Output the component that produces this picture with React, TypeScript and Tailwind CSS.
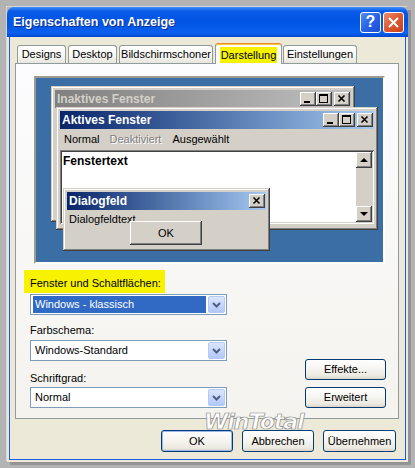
import React from 'react'

const winFrame =
  'bg-[#d4d0c8] shadow-[inset_-1px_-1px_0_#404040,inset_1px_1px_0_#d4d0c8,inset_-2px_-2px_0_#808080,inset_2px_2px_0_#ffffff]'
const raised =
  'bg-[#d4d0c8] shadow-[inset_-1px_-1px_0_#404040,inset_1px_1px_0_#ffffff,inset_-2px_-2px_0_#808080,inset_2px_2px_0_#d4d0c8]'
const sunken =
  'shadow-[inset_1px_1px_0_#808080,inset_-1px_-1px_0_#ffffff,inset_2px_2px_0_#404040,inset_-2px_-2px_0_#d4d0c8]'
const xpButton =
  'rounded-[3px] border border-[#003c74] bg-[linear-gradient(180deg,#ffffff_0%,#f6f5f1_45%,#ebe9e0_85%,#d8d3c8_100%)] flex items-center justify-center'
const activeCaption = 'bg-linear-to-r from-[#0a246a] to-[#a6caf0]'

function CapBtn({ kind }: { kind: 'min' | 'max' | 'close' }) {
  return (
    <div className={`w-[16px] h-[14px] ${raised}`}>
      <svg width="16" height="14" viewBox="0 0 16 14">
        {kind === 'min' && <rect x="4" y="9" width="6" height="2" fill="#000" />}
        {kind === 'max' && (
          <>
            <rect x="3.5" y="2.5" width="8" height="8" fill="none" stroke="#000" />
            <rect x="3" y="2" width="9" height="2" fill="#000" />
          </>
        )}
        {kind === 'close' && <path d="M4.5 3.5 L10.5 9.5 M10.5 3.5 L4.5 9.5" stroke="#000" strokeWidth="1.6" />}
      </svg>
    </div>
  )
}

function ScrollBtn({ up }: { up?: boolean }) {
  return (
    <div className={`w-[16px] h-[16px] ${raised}`}>
      <svg width="16" height="16" viewBox="0 0 16 16">
        {up ? <path d="M4 10 H12 L8 6 Z" fill="#000" /> : <path d="M4 6 H12 L8 10 Z" fill="#000" />}
      </svg>
    </div>
  )
}

function Combo({ value, selected }: { value: string; selected?: boolean }) {
  return (
    <div className="ml-[6px] w-[197px] h-[21px] border border-[#7f9db9] bg-white flex items-center pl-[2px] pr-[1px] gap-[2px]">
      <div
        className={`flex-1 h-[17px] flex items-center pl-[2px] ${selected ? 'bg-[#316ac5] text-white' : 'text-black'}`}
      >
        {value}
      </div>
      <div className="w-[17px] h-[17px] rounded-[2px] border border-[#b6c8f5] bg-[linear-gradient(180deg,#dbe6fe_0%,#c3d4fb_60%,#b2c8f8_100%)] flex items-center justify-center">
        <svg width="11" height="8" viewBox="0 0 11 8">
          <path d="M2 2 L5.5 5.5 L9 2" fill="none" stroke="#4d6185" strokeWidth="2" />
        </svg>
      </div>
    </div>
  )
}

function Tab({ label, w, ml }: { label: string; w: string; ml: string }) {
  return (
    <div
      className={`${w} ${ml} h-[18px] border border-b-0 border-[#919b9c] rounded-t-[3px] bg-[linear-gradient(180deg,#ffffff_0%,#f6f6f3_60%,#e6e5de_100%)] flex items-center justify-center`}
    >
      {label}
    </div>
  )
}

export default function App() {
  return (
    <div className="relative w-[415px] h-[468px] overflow-hidden bg-[#b3b3b3] pl-[7px] pt-[7px] font-['Liberation_Sans',Arial,sans-serif] text-[11px] leading-[13px] text-black">
      <div className="w-[401px] h-[455px] flex flex-col shadow-[-1px_-1px_0_#d6d6d6,3px_3px_0_#939393]">
        {/* title bar */}
        <div className="h-[30px] rounded-t-[7px] bg-[linear-gradient(180deg,#3d8ff8_0%,#0a5ae8_14%,#0054e3_50%,#0a60f0_86%,#0047cf_100%)] flex items-center justify-between pl-[6px] pr-[4px]">
          <span className="text-white font-bold text-[12.5px] leading-[16px] [text-shadow:1px_1px_0_#0b2a8c]">
            Eigenschaften von Anzeige
          </span>
          <div className="flex gap-[2px]">
            <div className="w-[21px] h-[21px] rounded-[3px] border border-white bg-[linear-gradient(135deg,#4f8cf5_0%,#2a63e6_50%,#1c4fd6_100%)] flex items-center justify-center text-white font-bold text-[16px] leading-none">
              ?
            </div>
            <div className="w-[21px] h-[21px] rounded-[3px] border border-white bg-[linear-gradient(135deg,#ec8c6a_0%,#dc5a32_50%,#c8421a_100%)] flex items-center justify-center">
              <svg width="13" height="13" viewBox="0 0 13 13">
                <path d="M2 2 L11 11 M11 2 L2 11" stroke="#fff" strokeWidth="2" />
              </svg>
            </div>
          </div>
        </div>

        {/* body */}
        <div className="flex-1 bg-[#ece9d8] px-[2px] pb-[2px]">
          <div className="h-full border-x border-b border-[#1c5ae6] px-[5px] pt-[6px] flex flex-col">
            {/* tabs */}
            <div className="h-[20px] flex items-end">
              <Tab label="Designs" w="w-[49px]" ml="ml-[2px]" />
              <Tab label="Desktop" w="w-[49px]" ml="ml-[2px]" />
              <Tab label="Bildschirmschoner" w="w-[94px]" ml="ml-[2px]" />
              <div className="relative z-10 ml-[2px] w-[67px] h-[21px] mb-[-1px] border border-b-0 border-[#919b9c] border-t-[#e68b2c] rounded-t-[3px] bg-[#fcfcfe] shadow-[inset_0_1px_0_#ffc73c] flex items-end justify-center pb-[1px]">
                <div className="w-[57px] h-[16px] bg-[#f6f200] flex items-center justify-center">Darstellung</div>
              </div>
              <Tab label="Einstellungen" w="w-[74px]" ml="ml-[1px]" />
            </div>

            {/* tab panel */}
            <div className="w-[384px] h-[356px] border border-[#919b9c] bg-[linear-gradient(180deg,#fcfcfe_0%,#f4f3ee_100%)] flex flex-col">
              {/* preview */}
              <div className="ml-[18px] mt-[12px] w-[351px] h-[188px] border-2 border-t-[#9d9b90] border-l-[#9d9b90] border-b-white border-r-white bg-[#3a6ea5] relative overflow-hidden">
                {/* inactive window */}
                <div className={`absolute left-[15px] top-[8px] w-[304px] h-[136px] p-[4px] ${winFrame}`}>
                  <div className="h-[18px] bg-linear-to-r from-[#808080] to-[#c0c0c0] flex items-center justify-between pl-[2px] pr-[1px]">
                    <span className="text-[#d4d0c8] font-bold text-[12px]">Inaktives Fenster</span>
                    <div className="flex">
                      <CapBtn kind="min" />
                      <CapBtn kind="max" />
                      <div className="ml-[2px]">
                        <CapBtn kind="close" />
                      </div>
                    </div>
                  </div>
                </div>

                {/* active window */}
                <div className={`absolute left-[20px] top-[29px] w-[322px] h-[123px] p-[4px] flex flex-col ${winFrame}`}>
                  <div className={`h-[18px] ${activeCaption} flex items-center justify-between pl-[2px] pr-[1px]`}>
                    <span className="text-white font-bold text-[12px]">Aktives Fenster</span>
                    <div className="flex">
                      <CapBtn kind="min" />
                      <CapBtn kind="max" />
                      <div className="ml-[2px]">
                        <CapBtn kind="close" />
                      </div>
                    </div>
                  </div>
                  <div className="h-[21px] flex items-center pl-[4px]">
                    <span className="mr-[10px]">Normal</span>
                    <span className="mr-[11px] text-[#808080] [text-shadow:1px_1px_0_#ffffff]">Deaktiviert</span>
                    <span>Ausgewählt</span>
                  </div>
                  <div className={`h-[74px] p-[2px] flex ${sunken}`}>
                    <div className="flex-1 bg-white pl-[1px] pt-[3px] font-bold text-[12px]">Fenstertext</div>
                    <div className="w-[16px] flex flex-col justify-between bg-[#d4d0c8]">
                      <ScrollBtn up />
                      <ScrollBtn />
                    </div>
                  </div>
                </div>

                {/* dialog */}
                <div className={`absolute left-[27px] top-[110px] w-[207px] h-[63px] p-[4px] ${winFrame}`}>
                  <div className={`h-[18px] ${activeCaption} flex items-center justify-between pl-[2px] pr-[1px]`}>
                    <span className="text-white font-bold text-[12px]">Dialogfeld</span>
                    <CapBtn kind="close" />
                  </div>
                  <div className="pl-[2px] pt-[3px]">Dialogfeldtext</div>
                  <div className={`absolute left-[67px] top-[33px] w-[72px] h-[24px] flex items-center justify-center ${raised}`}>
                    OK
                  </div>
                </div>
              </div>

              {/* controls */}
              <div className="flex justify-between mt-[6px] ml-[8px] mr-[12px]">
                <div className="flex flex-col">
                  <div className="w-[141px] h-[23px] bg-[#f6f200] pl-[6px] pt-[7px]">Fenster und Schaltflächen:</div>
                  <div className="mt-[1px]">
                    <Combo value="Windows - klassisch" selected />
                  </div>
                  <div className="ml-[6px] mt-[9px]">Farbschema:</div>
                  <div className="mt-[3px]">
                    <Combo value="Windows-Standard" />
                  </div>
                  <div className="ml-[6px] mt-[11px]">Schriftgrad:</div>
                  <div className="mt-[2px]">
                    <Combo value="Normal" />
                  </div>
                </div>
                <div className="self-end flex flex-col gap-[7px]">
                  <div className={`w-[81px] h-[21px] ${xpButton}`}>Effekte...</div>
                  <div className={`w-[81px] h-[21px] ${xpButton}`}>Erweitert</div>
                </div>
              </div>
            </div>

            {/* dialog buttons */}
            <div className="mt-[11px] flex justify-end gap-[9px] pr-[4px]">
              <div className={`w-[72px] h-[22px] ${xpButton} shadow-[inset_0_0_0_1px_#9ab7ee]`}>OK</div>
              <div className={`w-[72px] h-[22px] ${xpButton}`}>Abbrechen</div>
              <div className={`w-[73px] h-[22px] ${xpButton}`}>Übernehmen</div>
            </div>
          </div>
        </div>
      </div>

      {/* watermark */}
      <div className="absolute left-[204px] top-[410px] font-['DejaVu_Sans',sans-serif] italic font-bold text-[22px] leading-[24px] tracking-[-1px] text-white/90 [-webkit-text-stroke:0.7px_#8a8a8a]">
        WinTotal
      </div>
    </div>
  )
}
